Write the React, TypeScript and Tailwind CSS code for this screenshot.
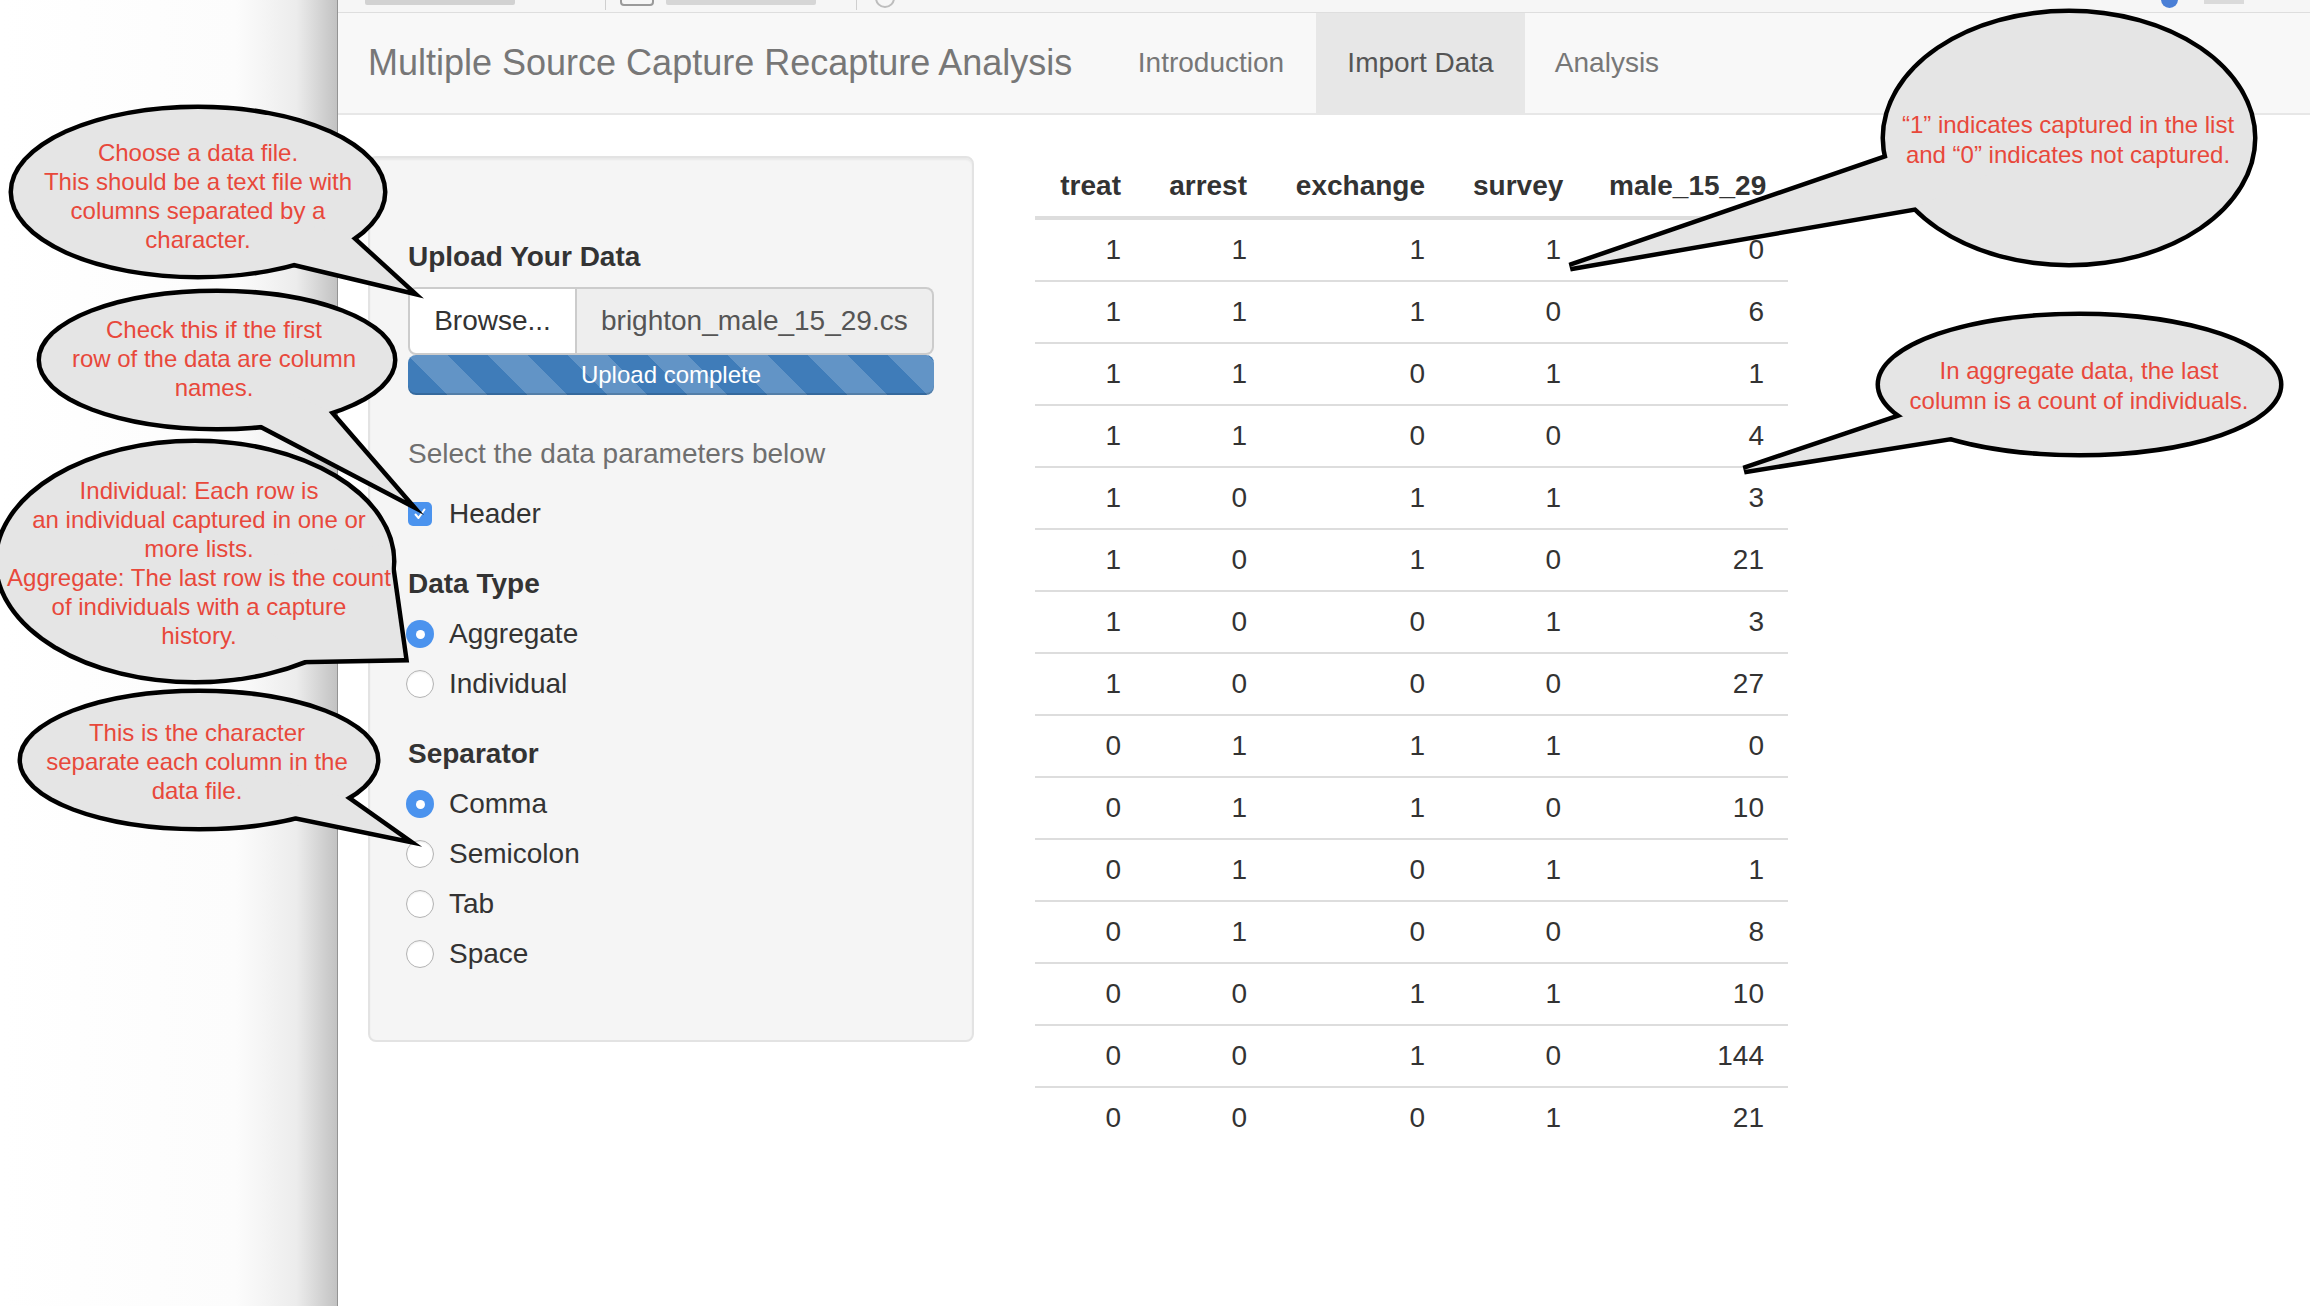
import React from "react";

const DATA = [
  [1, 1, 1, 1, 0],
  [1, 1, 1, 0, 6],
  [1, 1, 0, 1, 1],
  [1, 1, 0, 0, 4],
  [1, 0, 1, 1, 3],
  [1, 0, 1, 0, 21],
  [1, 0, 0, 1, 3],
  [1, 0, 0, 0, 27],
  [0, 1, 1, 1, 0],
  [0, 1, 1, 0, 10],
  [0, 1, 0, 1, 1],
  [0, 1, 0, 0, 8],
  [0, 0, 1, 1, 10],
  [0, 0, 1, 0, 144],
  [0, 0, 0, 1, 21],
];

const COLUMNS = [
  { name: "treat", width: "w-[110px]" },
  { name: "arrest", width: "w-[126px]" },
  { name: "exchange", width: "w-[178px]" },
  { name: "survey", width: "w-[136px]" },
  { name: "male_15_29", width: "w-[203px]" },
];

type Pt = [number, number];
type Bubble = { cx: number; cy: number; rx: number; ry: number; tail: Pt[] };

// callout shapes: ellipse + tail (base1, tip, base2)
const BUBBLES: Bubble[] = [
  { cx: 198, cy: 192, rx: 185, ry: 83, tail: [[351, 238], [408, 290], [295, 263]] },
  { cx: 217, cy: 360, rx: 176, ry: 67, tail: [[327, 410], [405, 500], [258, 423]] },
  { cx: 195, cy: 561.5, rx: 197, ry: 118.5, tail: [[388, 545], [404, 658], [300, 660]] },
  { cx: 199, cy: 760, rx: 177, ry: 67, tail: [[344, 797], [402, 838], [290, 815]] },
  { cx: 2069, cy: 138, rx: 184, ry: 125, tail: [[1890, 157], [1570, 267], [1917, 207]] },
  { cx: 2079.5, cy: 384.5, rx: 199.5, ry: 68.5, tail: [[1907, 415], [1744, 470], [1957, 436]] },
];

function tailPoints(b: Bubble) {
  return [...b.tail, [b.cx, b.cy] as Pt].map((p) => p.join(",")).join(" ");
}

function Callouts() {
  return (
    <svg
      className="pointer-events-none absolute left-0 top-0"
      width={2310}
      height={1306}
      viewBox="0 0 2310 1306"
    >
      {BUBBLES.map((b, i) => (
        <g key={i}>
          <g fill="none" stroke="#000" strokeWidth={9} strokeMiterlimit={10}>
            <ellipse cx={b.cx} cy={b.cy} rx={b.rx} ry={b.ry} />
            <polygon points={tailPoints(b)} />
          </g>
          <g fill="#e5e5e5">
            <ellipse cx={b.cx} cy={b.cy} rx={b.rx} ry={b.ry} />
            <polygon points={tailPoints(b)} />
          </g>
        </g>
      ))}
    </svg>
  );
}

function CalloutText() {
  const base = "pointer-events-none absolute text-center text-[24px] whitespace-nowrap text-[#e8483b]";
  return (
    <>
      <div className={`${base} left-[18px] top-[138px] w-[360px] leading-[29px]`}>
        <div>Choose a data file.</div>
        <div>This should be a text file with</div>
        <div>columns separated by a</div>
        <div>character.</div>
      </div>
      <div className={`${base} left-[44px] top-[315px] w-[340px] leading-[29px]`}>
        <div>Check this if the first</div>
        <div>row of the data are column</div>
        <div>names.</div>
      </div>
      <div className={`${base} left-0 top-[476px] w-[398px] leading-[29px]`}>
        <div>Individual: Each row is</div>
        <div>an individual captured in one or</div>
        <div>more lists.</div>
        <div>Aggregate: The last row is the count</div>
        <div>of individuals with a capture</div>
        <div>history.</div>
      </div>
      <div className={`${base} left-[27px] top-[718px] w-[340px] leading-[29px]`}>
        <div>This is the character</div>
        <div>separate each column in the</div>
        <div>data file.</div>
      </div>
      <div className={`${base} left-[1888px] top-[110px] w-[360px] leading-[30px]`}>
        <div>“1” indicates captured in the list</div>
        <div>and “0” indicates not captured.</div>
      </div>
      <div className={`${base} left-[1879px] top-[356px] w-[400px] leading-[30px]`}>
        <div>In aggregate data, the last</div>
        <div>column is a count of individuals.</div>
      </div>
    </>
  );
}

function Radio({ checked, label }: { checked?: boolean; label: string }) {
  return (
    <div className="mt-[10px] flex h-[40px] items-center">
      {checked ? (
        <span className="-ml-[2px] flex h-[28px] w-[28px] items-center justify-center rounded-full bg-[#4b93ee]">
          <span className="h-[9px] w-[9px] rounded-full bg-white" />
        </span>
      ) : (
        <span className="-ml-[2px] h-[28px] w-[28px] rounded-full border border-[#b3b3b3] bg-white shadow-[inset_0_1px_2px_rgba(0,0,0,0.08)]" />
      )}
      <span className="ml-[15px] text-[28px] text-[#333]">{label}</span>
    </div>
  );
}

function Sidebar() {
  return (
    <div className="h-[886px] w-[606px] shrink-0 rounded-[8px] border-2 border-[#e3e3e3] bg-[#f5f5f5] px-[38px] pt-[79px] shadow-[inset_0_2px_2px_rgba(0,0,0,0.05)]">
      <div className="h-[40px] text-[28px] font-bold leading-[40px] text-[#333]">Upload Your Data</div>
      <div className="mt-[10px] flex h-[68px] w-[526px]">
        <div className="flex w-[169px] shrink-0 items-center justify-center rounded-l-[8px] border-2 border-[#cccccc] bg-white text-[28px] text-[#333]">
          Browse...
        </div>
        <div className="flex min-w-0 flex-1 items-center rounded-r-[8px] border-2 border-l-0 border-[#cccccc] bg-[#eeeeee] px-[24px] text-[28px] text-[#555]">
          <div className="min-w-0 overflow-hidden whitespace-nowrap">brighton_male_15_29.csv</div>
        </div>
      </div>
      <div className="flex h-[40px] w-[526px] items-center justify-center rounded-[8px] bg-[#3f7cb9] bg-[linear-gradient(45deg,rgba(255,255,255,.18)_25%,transparent_25%,transparent_50%,rgba(255,255,255,.18)_50%,rgba(255,255,255,.18)_75%,transparent_75%,transparent)] bg-size-[80px_80px] text-[24px] text-white shadow-[inset_0_-2px_0_rgba(0,0,0,0.15)]">
        Upload complete
      </div>
      <div className="mt-[39px] h-[40px] text-[28px] leading-[40px] text-[#6f6f6f]">
        Select the data parameters below
      </div>
      <div className="mt-[20px] flex h-[40px] items-center">
        <span className="flex h-[24px] w-[24px] items-center justify-center rounded-[5px] bg-[#4b93ee]">
          <svg width="16" height="16" viewBox="0 0 16 16">
            <path d="M3.5 8.5 L6.5 12 L12.5 3.5" fill="none" stroke="#fff" strokeWidth="2" strokeLinecap="round" strokeLinejoin="round" />
          </svg>
        </span>
        <span className="ml-[17px] text-[28px] text-[#333]">Header</span>
      </div>
      <div className="mt-[30px] h-[40px] text-[28px] font-bold leading-[40px] text-[#333]">Data Type</div>
      <Radio checked label="Aggregate" />
      <Radio label="Individual" />
      <div className="mt-[30px] h-[40px] text-[28px] font-bold leading-[40px] text-[#333]">Separator</div>
      <Radio checked label="Comma" />
      <Radio label="Semicolon" />
      <Radio label="Tab" />
      <Radio label="Space" />
    </div>
  );
}

function DataTable() {
  return (
    <div className="ml-[61px] w-[753px] text-[28px] text-[#333]">
      <div className="flex h-[64px] items-center border-b-4 border-[#dddddd] font-bold">
        {COLUMNS.map((c) => (
          <div key={c.name} className={`${c.width} px-[24px] text-right`}>
            {c.name}
          </div>
        ))}
      </div>
      {DATA.map((row, i) => (
        <div
          key={i}
          className={i === 0 ? "flex h-[60px] items-center" : "flex h-[62px] items-center border-t-2 border-[#dddddd]"}
        >
          {row.map((v, j) => (
            <div key={j} className={`${COLUMNS[j].width} px-[24px] text-right`}>
              {v}
            </div>
          ))}
        </div>
      ))}
    </div>
  );
}

function Navbar() {
  return (
    <div className="flex h-[102px] items-stretch border-b-2 border-[#e7e7e7] bg-[#f8f8f8]">
      <div className="flex w-[768px] items-center whitespace-nowrap px-[30px] text-[36px] text-[#777]">
        Multiple Source Capture Recapture Analysis
      </div>
      <div className="flex w-[210px] items-center justify-center text-[28px] text-[#777]">Introduction</div>
      <div className="flex w-[209px] items-center justify-center bg-[#e7e7e7] text-[28px] text-[#555]">Import Data</div>
      <div className="flex w-[164px] items-center justify-center text-[28px] text-[#777]">Analysis</div>
    </div>
  );
}

// browser chrome remnants at the very top, mostly scrolled off
function AddressStrip() {
  return (
    <div className="flex h-[13px] items-start overflow-hidden border-b border-[#dedede] bg-[#f6f6f6]">
      <span className="ml-[27px] h-[5px] w-[150px] rounded-b-[2px] bg-[#d2d2d2]" />
      <span className="ml-[90px] h-[10px] w-px bg-[#cfcfcf]" />
      <span className="ml-[14px] -mt-[8px] h-[14px] w-[34px] rounded-[4px] border-2 border-[#9a9a9a]" />
      <span className="ml-[12px] h-[5px] w-[150px] rounded-b-[2px] bg-[#d6d6d6]" />
      <span className="ml-[40px] h-[10px] w-px bg-[#cfcfcf]" />
      <span className="ml-[18px] -mt-[12px] h-[20px] w-[20px] rounded-full border-2 border-[#bdbdbd]" />
      <span className="ml-[1266px] -mt-[9px] h-[17px] w-[17px] rounded-full bg-[#4a7fd6]" />
      <span className="ml-[26px] h-[4px] w-[40px] bg-[#dadada]" />
    </div>
  );
}

export default function App() {
  return (
    <div className="relative flex h-[1306px] w-[2310px] overflow-hidden bg-white font-['Liberation_Sans',Arial,sans-serif]">
      <div className="w-[338px] shrink-0 border-r border-[#939393] bg-[linear-gradient(to_right,#ffffff_0%,#fcfcfc_70%,#ececec_88%,#c2c2c2_100%)]" />
      <div className="flex flex-1 flex-col bg-white">
        <AddressStrip />
        <Navbar />
        <div className="flex pl-[30px] pt-[41px]">
          <Sidebar />
          <DataTable />
        </div>
      </div>
      <Callouts />
      <CalloutText />
    </div>
  );
}
